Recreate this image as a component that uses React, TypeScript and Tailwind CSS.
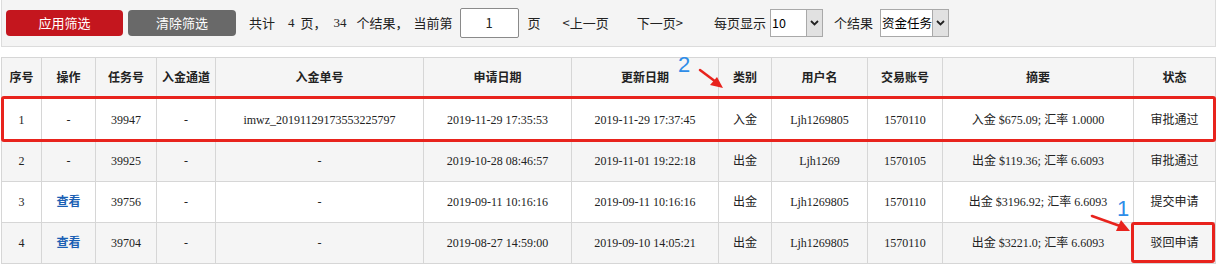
const rows = [
  { no: '1', op: '-', task: '39947', ch: '-', order: 'imwz_20191129173553225797', apply: '2019-11-29 17:35:53', update: '2019-11-29 17:37:45', type: '入金', user: 'Ljh1269805', acct: '1570110', summary: '入金 $675.09; 汇率 1.0000', status: '审批通过' },
  { no: '2', op: '-', task: '39925', ch: '-', order: '-', apply: '2019-10-28 08:46:57', update: '2019-11-01 19:22:18', type: '出金', user: 'Ljh1269', acct: '1570105', summary: '出金 $119.36; 汇率 6.6093', status: '审批通过' },
  { no: '3', op: '查看', task: '39756', ch: '-', order: '-', apply: '2019-09-11 10:16:16', update: '2019-09-11 10:16:16', type: '出金', user: 'Ljh1269805', acct: '1570110', summary: '出金 $3196.92; 汇率 6.6093', status: '提交申请' },
  { no: '4', op: '查看', task: '39704', ch: '-', order: '-', apply: '2019-08-27 14:59:00', update: '2019-09-10 14:05:21', type: '出金', user: 'Ljh1269805', acct: '1570110', summary: '出金 $3221.0; 汇率 6.6093', status: '驳回申请' },
];

const headers = ['序号', '操作', '任务号', '入金通道', '入金单号', '申请日期', '更新日期', '类别', '用户名', '交易账号', '摘要', '状态'];
const widths = ['w-[40px]', 'w-[54px]', 'w-[61px]', 'w-[59px]', 'w-[208px]', 'w-[148px]', 'w-[147px]', 'w-[53px]', 'w-[96px]', 'w-[75px]', 'w-[191px]', 'w-[82px]'];

const sans = { fontFamily: '"Noto Sans CJK SC", sans-serif' };
const serif = { fontFamily: '"Liberation Serif", "Noto Sans CJK SC", serif' };

function Select({ value, width }: { value: string; width: string }) {
  return (
    <div className={`flex h-[28px] items-stretch border border-[#a9a9a9] bg-white ${width}`}>
      <span className="flex flex-1 items-center whitespace-nowrap pl-[1px] text-[12.5px] text-black" style={sans}>{value}</span>
      <span className="flex w-[16px] shrink-0 items-center justify-center border-l border-[#a9a9a9] bg-[#e1e1e1]">
        <svg width="9" height="6" viewBox="0 0 9 6"><path d="M1 1 L4.5 4.5 L8 1" stroke="#222" strokeWidth="1.8" fill="none" /></svg>
      </span>
    </div>
  );
}

export default function App() {
  return (
    <div className="relative h-[265px] w-[1217px] overflow-hidden bg-white">
      <div className="mx-[1px] flex h-[47px] items-center whitespace-nowrap border-x border-b border-[#dcdcdc] bg-[#f4f4f4] pl-[4px] text-[13px] text-[#222]" style={sans}>
        <button type="button" className="h-[26px] w-[117px] rounded-[4px] bg-[#c4161e] text-[13px] text-white">应用筛选</button>
        <button type="button" className="ml-[5px] h-[26px] w-[108px] rounded-[4px] bg-[#696969] text-[13px] text-white">清除筛选</button>
        <span className="ml-[13px]">共计</span>
        <span className="ml-[13px]" style={serif}>4</span>
        <span className="ml-[6px]">页，</span>
        <span className="ml-[7px]" style={serif}>34</span>
        <span className="ml-[10px]">个结果，</span>
        <span className="ml-[5px]">当前第</span>
        <div className="ml-[7px] flex h-[30px] w-[59px] items-center justify-center rounded-[2px] border border-[#8a8a8a] bg-white text-[13px]">1</div>
        <span className="ml-[9px]">页</span>
        <span className="ml-[22px]">&lt;上一页</span>
        <span className="ml-[28px]">下一页&gt;</span>
        <span className="ml-[31px]">每页显示</span>
        <div className="ml-[4px]"><Select value="10" width="w-[53px]" /></div>
        <span className="ml-[11px]">个结果</span>
        <div className="ml-[7px]"><Select value="资金任务" width="w-[69px]" /></div>
      </div>

      <table className="ml-[1px] mt-[10px] table-fixed border-collapse text-[12px] text-[#222]" style={serif}>
        <thead>
          <tr className="h-[41px] bg-[#f5f5f5]">
            {headers.map((h, i) => (
              <th key={h} className={`${widths[i]} border-x border-t border-[#d6d6d6] font-bold`}>{h}</th>
            ))}
          </tr>
        </thead>
        <tbody>
          {rows.map((r, idx) => {
            const cells = [r.no, r.op, r.task, r.ch, r.order, r.apply, r.update, r.type, r.user, r.acct, r.summary, r.status];
            return (
              <tr key={r.no} className={`${idx === 0 ? 'h-[42px]' : 'h-[41px]'} ${idx % 2 === 1 ? 'bg-[#f5f5f5]' : 'bg-white'}`}>
                {cells.map((c, i) => (
                  <td key={i} className="border border-[#d6d6d6] text-center">
                    {i === 1 && c === '查看' ? <a className="font-bold text-[#1a5fb4]">{c}</a> : c}
                  </td>
                ))}
              </tr>
            );
          })}
        </tbody>
      </table>

      {/* annotation boxes */}
      <div className="absolute left-[1px] top-[96px] h-[46px] w-[1215px] rounded-[3px] border-[3px] border-[#e8231d]" />
      <div className="absolute left-[1131px] top-[222px] h-[41px] w-[84px] rounded-[3px] border-[3px] border-[#e8231d]" />

      <span className="absolute left-[678px] top-[54px] text-[22px] leading-none text-[#2e8de8]" style={{ fontFamily: '"Liberation Sans", sans-serif' }}>2</span>
      <svg className="absolute left-[698px] top-[68px]" width="28" height="24" viewBox="0 0 28 24">
        <path d="M2 2 L18 14" stroke="#e8231d" strokeWidth="2.5" strokeLinecap="round" />
        <path d="M25 20 L12 17 L19 9 Z" fill="#e8231d" />
      </svg>

      <span className="absolute left-[1117px] top-[198px] text-[22px] leading-none text-[#2e8de8]" style={{ fontFamily: '"Liberation Sans", sans-serif' }}>1</span>
      <svg className="absolute left-[1090px] top-[212px]" width="44" height="24" viewBox="0 0 44 24">
        <path d="M2 4 L30 14" stroke="#e8231d" strokeWidth="2.5" strokeLinecap="round" />
        <path d="M40 19 L26 19 L31 8 Z" fill="#e8231d" />
      </svg>
    </div>
  );
}
